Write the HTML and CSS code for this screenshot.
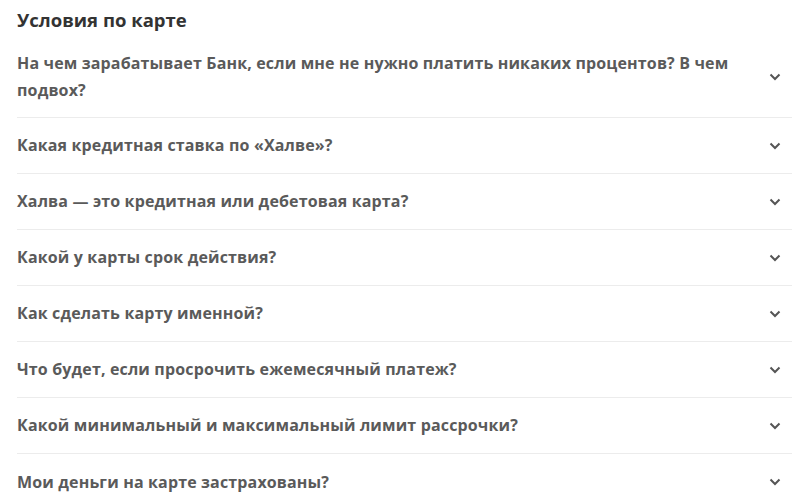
FILE: index.html
```html
<!DOCTYPE html>
<html lang="ru">
<head>
  <meta charset="UTF-8" />
  <title>Условия по карте</title>
  <link rel="stylesheet" href="styles.css">
</head>
<body>
  <div class="faq">
    <h2>Условия по карте</h2>
    <div class="item first">
      <span class="question">На чем зарабатывает Банк, если мне не нужно платить никаких процентов? В чем подвох?</span>
      <svg class="chevron" viewBox="0 0 12 8"><path d="M1.5 1.5 6 6l4.5-4.5"/></svg>
    </div>
    <div class="item">
      <span class="question">Какая кредитная ставка по «Халве»?</span>
      <svg class="chevron" viewBox="0 0 12 8"><path d="M1.5 1.5 6 6l4.5-4.5"/></svg>
    </div>
    <div class="item">
      <span class="question">Халва — это кредитная или дебетовая карта?</span>
      <svg class="chevron" viewBox="0 0 12 8"><path d="M1.5 1.5 6 6l4.5-4.5"/></svg>
    </div>
    <div class="item">
      <span class="question">Какой у карты срок действия?</span>
      <svg class="chevron" viewBox="0 0 12 8"><path d="M1.5 1.5 6 6l4.5-4.5"/></svg>
    </div>
    <div class="item">
      <span class="question">Как сделать карту именной?</span>
      <svg class="chevron" viewBox="0 0 12 8"><path d="M1.5 1.5 6 6l4.5-4.5"/></svg>
    </div>
    <div class="item">
      <span class="question">Что будет, если просрочить ежемесячный платеж?</span>
      <svg class="chevron" viewBox="0 0 12 8"><path d="M1.5 1.5 6 6l4.5-4.5"/></svg>
    </div>
    <div class="item">
      <span class="question">Какой минимальный и максимальный лимит рассрочки?</span>
      <svg class="chevron" viewBox="0 0 12 8"><path d="M1.5 1.5 6 6l4.5-4.5"/></svg>
    </div>
    <div class="item last">
      <span class="question">Мои деньги на карте застрахованы?</span>
      <svg class="chevron" viewBox="0 0 12 8"><path d="M1.5 1.5 6 6l4.5-4.5"/></svg>
    </div>
  </div>
</body>
</html>
```

FILE: styles.css
```css
body {
  font-family: 'Open Sans', 'Noto Sans', sans-serif;
  background-color: #ffffff;
  margin: 0;
  padding: 0;
}

.faq {
  padding: 0 8px 0 17px;
}

h2 {
  margin: 0;
  padding: 8px 0 13px;
  font-size: 18.5px;
  line-height: 24px;
  font-weight: 700;
  color: #333333;
}

.item {
  display: flex;
  align-items: center;
  justify-content: space-between;
  box-sizing: border-box;
  min-height: 56px;
  padding: 9px 0;
  border-bottom: 1px solid #ececec;
}

.item.first {
  padding: 5px 0 13px;
}

.item.last {
  border-bottom: none;
}

.question {
  flex: 1;
  max-width: 730px;
  font-size: 16px;
  line-height: 27px;
  letter-spacing: 0.15px;
  font-weight: 700;
  color: #5a5a5a;
}

.chevron {
  width: 12px;
  height: 8px;
  margin-right: 11px;
  fill: none;
  stroke: #555555;
  stroke-width: 2;
}
```
